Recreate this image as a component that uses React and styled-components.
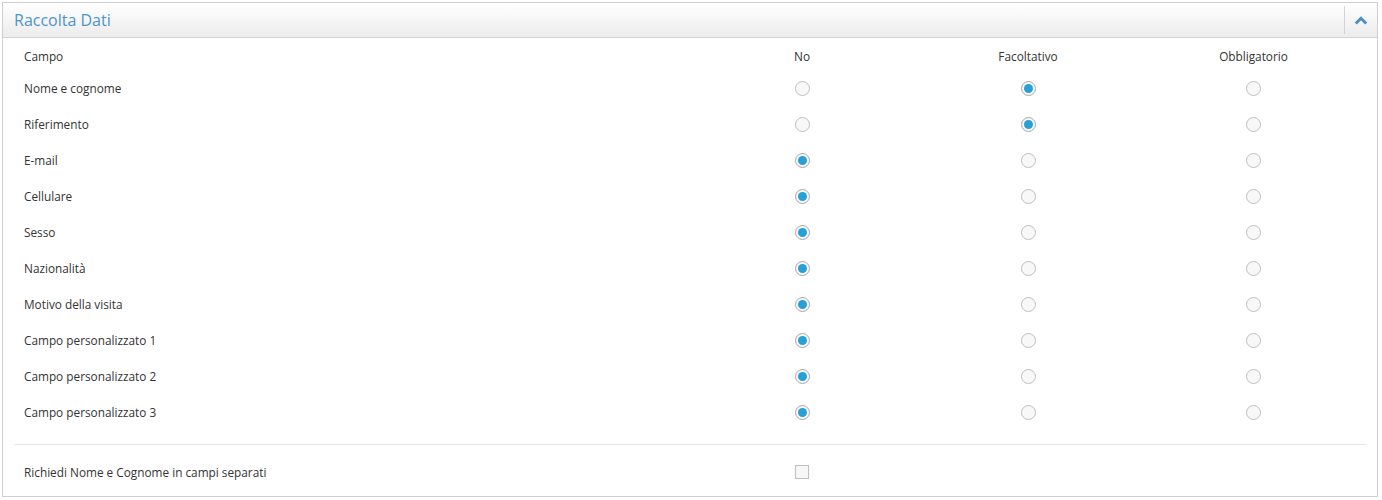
import React, { useState } from "react";
import styled, { createGlobalStyle } from "styled-components";

const Global = createGlobalStyle`
  body {
    margin: 0;
    padding: 2px;
    background: #fff;
    font-family: "Open Sans", "Liberation Sans", sans-serif;
    color: #333;
  }
`;

const Panel = styled.div`
  width: 1374px;
  border: 1px solid #cfcfcf;
  background: #fff;
`;

const PanelHeader = styled.div`
  display: flex;
  align-items: center;
  height: 34px;
  border-bottom: 1px solid #d4d4d4;
  background: linear-gradient(#ffffff, #ececec);
`;

const Title = styled.h3`
  flex: 1;
  margin: 0;
  padding-left: 11px;
  font-size: 16px;
  font-weight: 400;
  color: #4d94cc;
`;

const Collapse = styled.button`
  width: 33px;
  height: 28px;
  padding: 0;
  border: none;
  border-left: 1px solid #d4d4d4;
  background: transparent;
  display: flex;
  align-items: center;
  justify-content: center;
  cursor: pointer;
`;

const Body = styled.div`
  padding: 4px 11px 6px;
`;

const Grid = styled.div`
  display: grid;
  grid-template-columns: 1fr 226px 226px 225px;
`;

const Cell = styled.div`
  height: ${(p) => (p.$head ? 28 : 36)}px;
  display: flex;
  align-items: center;
  justify-content: ${(p) => (p.$center ? "center" : "flex-start")};
  padding-left: ${(p) => (p.$center ? 0 : 10)}px;
  font-size: 11.8px;
  color: #333;
`;

const Radio = styled.span`
  width: 15px;
  height: 15px;
  box-sizing: border-box;
  border-radius: 50%;
  border: 1px solid ${(p) => (p.$on ? "#a9a9a9" : "#bfbfbf")};
  background: #f8f8f8;
  display: flex;
  align-items: center;
  justify-content: center;
  cursor: pointer;
  &::after {
    content: "";
    width: 9px;
    height: 9px;
    border-radius: 50%;
    background: ${(p) => (p.$on ? "#2a9fd6" : "transparent")};
  }
`;

const Divider = styled.div`
  height: 1px;
  background: #e6e6e6;
  margin: 14px 0 9px;
`;

const Check = styled.span`
  width: 14px;
  height: 14px;
  box-sizing: border-box;
  border: 1px solid #bdbdbd;
  background: #f7f7f7;
  cursor: pointer;
`;

const fields = [
  ["Nome e cognome", 1],
  ["Riferimento", 1],
  ["E-mail", 0],
  ["Cellulare", 0],
  ["Sesso", 0],
  ["Nazionalità", 0],
  ["Motivo della visita", 0],
  ["Campo personalizzato 1", 0],
  ["Campo personalizzato 2", 0],
  ["Campo personalizzato 3", 0],
];

export default function App() {
  const [vals, setVals] = useState(fields.map((f) => f[1]));
  const [sep, setSep] = useState(false);

  return (
    <>
      <Global />
      <Panel>
        <PanelHeader>
          <Title>Raccolta Dati</Title>
          <Collapse>
            <svg width="14" height="9" viewBox="0 0 14 9">
              <path d="M1.8 7.5 L7 2.3 L12.2 7.5" fill="none" stroke="#4a8fc6" strokeWidth="3" />
            </svg>
          </Collapse>
        </PanelHeader>
        <Body>
          <Grid>
            <Cell $head>Campo</Cell>
            <Cell $head $center>No</Cell>
            <Cell $head $center>Facoltativo</Cell>
            <Cell $head $center>Obbligatorio</Cell>
            {fields.map(([name], i) => (
              <React.Fragment key={name}>
                <Cell>{name}</Cell>
                {[0, 1, 2].map((c) => (
                  <Cell $center key={c}>
                    <Radio
                      $on={vals[i] === c}
                      onClick={() => setVals(vals.map((v, j) => (j === i ? c : v)))}
                    />
                  </Cell>
                ))}
              </React.Fragment>
            ))}
          </Grid>
          <Divider />
          <Grid>
            <Cell>Richiedi Nome e Cognome in campi separati</Cell>
            <Cell $center>
              <Check onClick={() => setSep(!sep)} />
            </Cell>
            <Cell />
            <Cell />
          </Grid>
        </Body>
      </Panel>
    </>
  );
}
